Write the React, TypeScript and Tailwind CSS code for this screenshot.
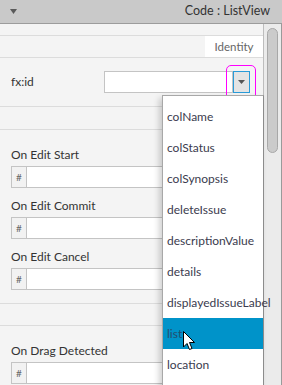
import React from "react";

const items = [
  "colName",
  "colStatus",
  "colSynopsis",
  "deleteIssue",
  "descriptionValue",
  "details",
  "displayedIssueLabel",
  "list",
  "location",
];

function Field({ label }: { label: string }) {
  return (
    <div className="flex flex-col">
      <div className="h-[16px] leading-[16px] text-[12px] text-[#333] pl-[11px]">{label}</div>
      <div className="mt-[3px] ml-[11px] mr-[8px] h-[22px] flex border border-[#c4c4c4] bg-white">
        <div className="w-[15px] h-full bg-[#f2f2f2] border-r border-[#c4c4c4] flex items-center justify-center text-[10px] text-[#666]">
          #
        </div>
        <div className="flex-1" />
      </div>
    </div>
  );
}

export default function App() {
  return (
    <div
      className="relative w-[282px] h-[385px] overflow-hidden bg-[#f4f4f4]"
      style={{ fontFamily: 'Lato, "Open Sans", sans-serif' }}
    >
      {/* header */}
      <div className="h-[24px] bg-[#c9c9c9] border-b border-[#9c9c9c] flex items-center justify-between pl-[10px] pr-[12px]">
        <svg width="7" height="6" viewBox="0 0 7 6">
          <path d="M0 0 H7 L3.5 5 Z" fill="#5a5a5a" />
        </svg>
        <span className="text-[12.5px] text-[#333] leading-none">Code : ListView</span>
      </div>

      <div className="flex h-[361px]">
        {/* main panel */}
        <div className="flex-1 flex flex-col">
          <div className="h-[12px] border-b border-[#dcdcdc]" />
          <div className="h-[22px] flex justify-end border-b border-[#dcdcdc]">
            <div className="w-[58px] bg-white flex items-center justify-center text-[11.5px] text-[#666]">
              Identity
            </div>
          </div>
          <div className="h-[49px] flex items-center border-b border-[#dcdcdc]">
            <div className="w-[104px] pl-[11px] text-[12px] text-[#333]">fx:id</div>
            <div className="w-[129px] h-[22px] bg-white border border-[#c4c4c4]" />
            <div className="w-[17px] h-[22px] border border-[#2a9bd8] bg-[#e4e4e4] flex items-center justify-center">
              <svg width="7" height="4" viewBox="0 0 7 4">
                <path d="M0 0 H7 L3.5 4 Z" fill="#555" />
              </svg>
            </div>
          </div>
          <div className="h-[23px] border-b border-[#dcdcdc]" />
          <div className="pt-[17px] pb-[13px] flex flex-col gap-[10px] border-b border-[#dcdcdc]">
            <Field label="On Edit Start" />
            <Field label="On Edit Commit" />
            <Field label="On Edit Cancel" />
          </div>
          <div className="h-[22px] border-b border-[#dcdcdc]" />
          <div className="pt-[17px] flex flex-col">
            <Field label="On Drag Detected" />
          </div>
        </div>

        {/* scrollbar */}
        <div className="w-[19px] bg-[#ebebeb] border-l border-[#bdbdbd] border-r border-r-[#9a9a9a] pt-[4px] flex justify-center">
          <div className="w-[11px] h-[125px] rounded-full bg-[#cbcbcb] border border-[#a8a8a8]" />
        </div>
      </div>

      {/* magenta highlight */}
      <div className="absolute left-[226px] top-[65px] w-[30px] h-[36px] border border-[#ff00ff] rounded-[5px]" />

      {/* dropdown */}
      <div className="absolute left-[162px] top-[95px] w-[102px] h-[300px] bg-white border border-[#a8a8a8] border-r-[#8c8c8c] shadow-[-3px_3px_6px_rgba(0,0,0,0.18)] pt-[5px]">
        {items.map((it) => (
          <div
            key={it}
            className={
              "h-[31px] flex items-center pl-[4px] text-[12px] whitespace-nowrap " +
              (it === "list" ? "bg-[#0093c9] text-[#244e6e]" : "text-[#3b3b4e]")
            }
          >
            {it}
          </div>
        ))}
      </div>

      {/* cursor */}
      <svg className="absolute left-[183px] top-[331px]" width="13" height="20" viewBox="0 0 13 20">
        <path
          d="M0.5 0.5 L0.5 16 L4 12.5 L6.5 18.5 L9 17.5 L6.5 11.5 L11.5 11.5 Z"
          fill="#fff"
          stroke="#000"
          strokeWidth="1"
          strokeLinejoin="round"
        />
      </svg>
    </div>
  );
}
